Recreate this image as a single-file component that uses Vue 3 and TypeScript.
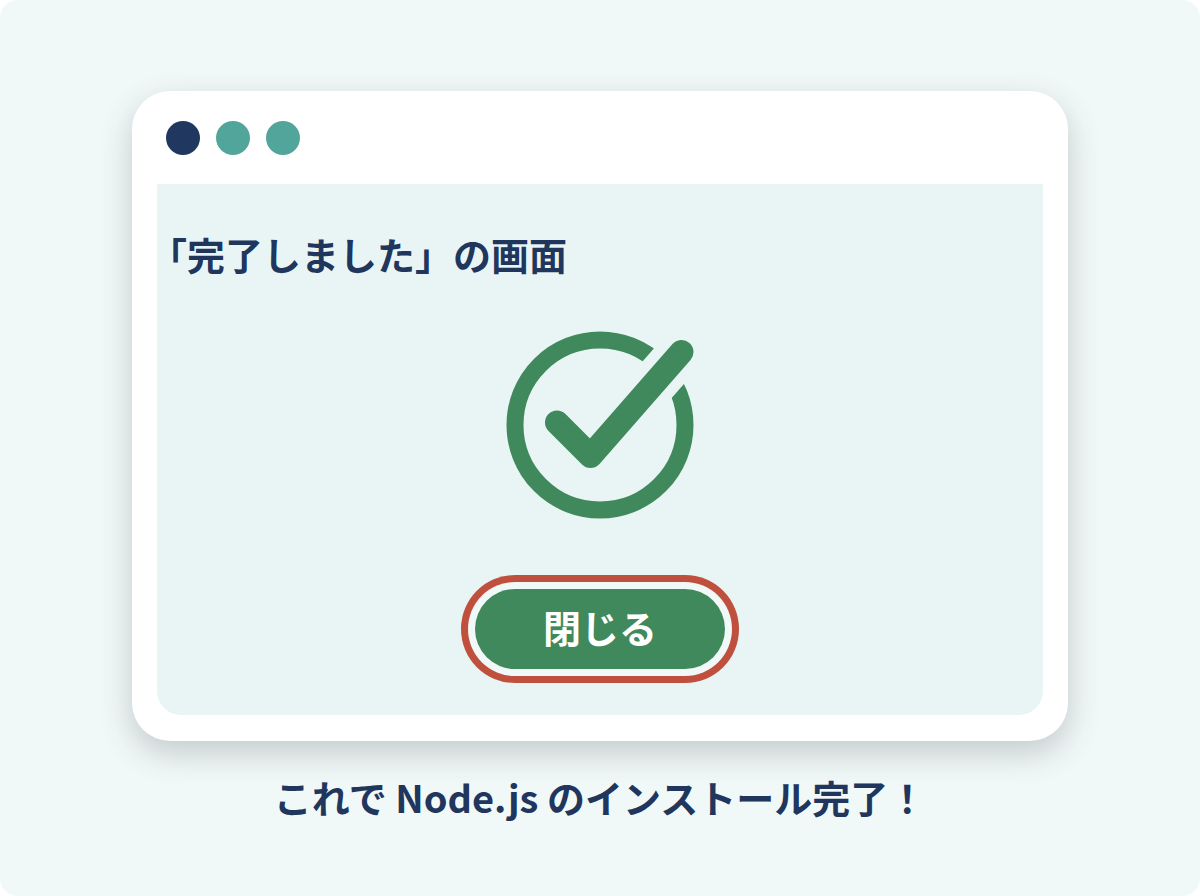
<script setup lang="ts">
interface WindowDot {
  id: string
  tone: 'navy' | 'teal'
}

const dots: WindowDot[] = [
  { id: 'first', tone: 'navy' },
  { id: 'second', tone: 'teal' },
  { id: 'third', tone: 'teal' },
]

const title = '「完了しました」の画面'
const closeLabel = '閉じる'
const caption = 'これで Node.js のインストール完了！'
</script>

<template>
  <main class="stage" lang="ja">
    <section class="window">
      <header class="titlebar">
        <span v-for="dot in dots" :key="dot.id" class="dot" :class="dot.tone"></span>
      </header>
      <div class="panel">
        <h1 class="title">{{ title }}</h1>
        <svg class="check" viewBox="0 0 188 188" aria-hidden="true">
          <defs>
            <mask id="check-gap" maskUnits="userSpaceOnUse" x="0" y="0" width="188" height="188">
              <rect width="188" height="188" fill="#fff" />
              <path d="M84.500 124.500L175.500 21L201 -8" fill="none" stroke="#000" stroke-width="46" />
            </mask>
          </defs>
          <circle cx="94" cy="94" r="85" fill="none" stroke="#40895c" stroke-width="17" mask="url(#check-gap)" />
          <path
            d="M51 91.500L84.500 125L175.500 21"
            fill="none"
            stroke="#40895c"
            stroke-width="24"
            stroke-linecap="round"
            stroke-linejoin="round"
          />
        </svg>
        <button class="close" type="button">{{ closeLabel }}</button>
      </div>
    </section>
    <p class="caption">{{ caption }}</p>
  </main>
</template>

<style>
body {
  background: #ffffff;
}
</style>

<style scoped>
.stage {
  box-sizing: border-box;
  min-height: 100vh;
  padding: 91px 11% 40px;
  border-radius: 18px;
  background: #f1f8f8;
  color: #20365c;
  font-family: "Noto Sans CJK JP", "Noto Sans", sans-serif;
}

.window {
  padding: 0 25px 26px;
  border-radius: 38px;
  background: #ffffff;
  box-shadow: 0 12px 32px rgba(50, 60, 62, 0.24);
}

.titlebar {
  display: flex;
  align-items: center;
  gap: 16px;
  height: 93px;
  padding-left: 9px;
}

.dot {
  width: 34px;
  height: 34px;
  border-radius: 50%;
}

.navy {
  background: #20385f;
}

.teal {
  background: #52a59b;
}

.panel {
  display: flex;
  flex-direction: column;
  align-items: center;
  padding: 42px 11px 46px;
  border-radius: 0 0 24px 24px;
  background: #e9f5f5;
}

.title {
  align-self: stretch;
  margin: 0;
  font-size: 38px;
  font-weight: 700;
  line-height: 56px;
  text-spacing-trim: trim-start;
}

.check {
  display: block;
  width: 188px;
  height: 188px;
  margin-top: 49px;
}

.close {
  width: 250px;
  height: 80px;
  margin: 70px 0 0;
  padding: 0 0 4px;
  border: 0;
  border-radius: 40px;
  background: #40895c;
  box-shadow: 0 0 0 7px #f1f8f8, 0 0 0 14px #bf503d;
  color: #ffffff;
  font-family: inherit;
  font-size: 38px;
  font-weight: 700;
  line-height: 56px;
}

.caption {
  margin: 28px 0 0;
  font-size: 38px;
  font-weight: 700;
  line-height: 56px;
  text-align: center;
}
</style>
